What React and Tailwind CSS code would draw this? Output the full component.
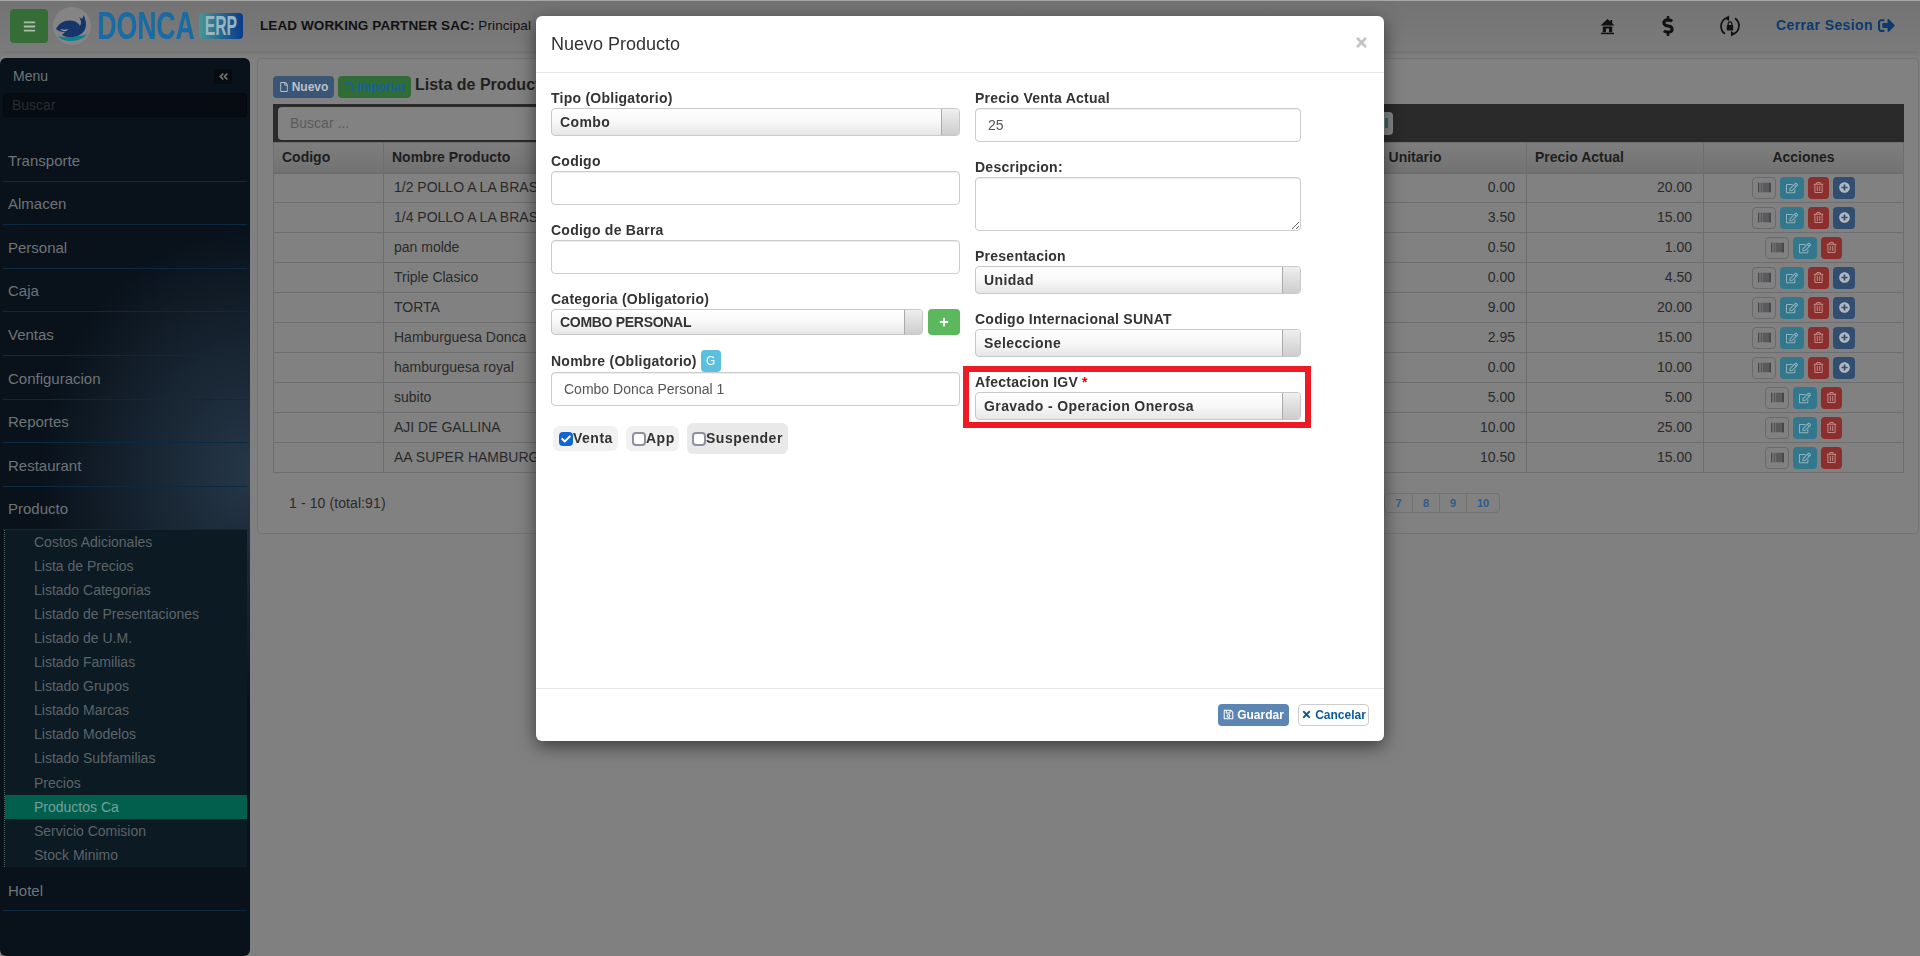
import {
  FaBars, FaDollarSign, FaSignOutAlt, FaRegFile, FaAngleDoubleLeft, FaBarcode,
  FaRegEdit, FaRegTrashAlt, FaPlusCircle, FaPlus, FaTimes, FaRegSave, FaCheck,
} from "react-icons/fa";

const MENU_TOP = ["Transporte", "Almacen", "Personal", "Caja", "Ventas", "Configuracion", "Reportes", "Restaurant"];

const SUB_MENU = [
  "Costos Adicionales", "Lista de Precios", "Listado Categorias", "Listado de Presentaciones",
  "Listado de U.M.", "Listado Familias", "Listado Grupos", "Listado Marcas", "Listado Modelos",
  "Listado Subfamilias", "Precios", "Productos Ca", "Servicio Comision", "Stock Minimo",
];

const ROWS = [
  ["1/2 POLLO A LA BRASA", "0.00", "20.00", true],
  ["1/4 POLLO A LA BRASA", "3.50", "15.00", true],
  ["pan molde", "0.50", "1.00", false],
  ["Triple Clasico", "0.00", "4.50", true],
  ["TORTA", "9.00", "20.00", true],
  ["Hamburguesa Donca", "2.95", "15.00", true],
  ["hamburguesa royal", "0.00", "10.00", true],
  ["subito", "5.00", "5.00", false],
  ["AJI DE GALLINA", "10.00", "25.00", false],
  ["AA SUPER HAMBURGUESA", "10.50", "15.00", false],
];

const Whale = () => (
  <svg viewBox="0 0 38 38" className="w-[38px] h-[38px] shrink-0">
    <circle cx="19" cy="19" r="19" fill="#858585" />
    <path d="M5 29c4 7 24 7 29-2-6 3-10 1-15 2s-9 2-14 0z" fill="#12808c" />
    <path d="M3 22c3-7 11-10 18-8 3 1 5 3 6 5 2-3 1-6-1-9l3 2 2-4 1 4c2 5 1 12-4 15-6 4-14 4-19 1l3-3c-4 0-7-1-9-3z" fill="#15356b" />
    <path d="M7 22c3 1 6 1 8 0-1 3-5 3-8 0z" fill="#8fa0b0" />
  </svg>
);

const HomeIcon = () => (
  <svg viewBox="0 0 16 18" className="w-[15px] h-[17px]" fill="#111">
    <path d="M8 1l3 2.6V2h2v3.4L15.5 8H.5z" />
    <path d="M3 9h10v6H9.6v-4H6.4v4H3z" />
    <rect x="1" y="15.6" width="14" height="1.6" />
  </svg>
);

const LockCycle = () => (
  <svg viewBox="0 0 24 24" className="w-[22px] h-[22px]" fill="none" stroke="#111" strokeWidth="1.9">
    <path d="M6.5 20.5a10 10 0 0 1 1-17" />
    <path d="M17.5 3.5a10 10 0 0 1-1 17" />
    <path d="M11 0.5v6l-5-3z" fill="#111" stroke="none" />
    <path d="M13 23.5v-6l5 3z" fill="#111" stroke="none" />
    <rect x="8.5" y="11" width="7" height="6" rx="0.8" fill="#111" stroke="none" />
    <path d="M10 11V9.6a2 2 0 0 1 4 0V11" strokeWidth="1.4" />
  </svg>
);

const Navbar = () => (
  <header className="h-[51px] border-t border-t-[#a8a8a8] bg-gradient-to-b from-[#737373] to-[#7b7b7b] shadow-[0_2px_5px_rgba(0,0,0,0.12)] flex items-center pl-[10px] pr-[25px]">
    <button className="w-[38px] h-[34px] rounded bg-[#366c36] flex items-center justify-center text-[#a9bfa9] text-[13px]">
      <FaBars />
    </button>
    <div className="ml-[5px]"><Whale /></div>
    <div className="ml-[6px] w-[97px] h-[30px]">
      <span className="block origin-top-left scale-x-[0.7] whitespace-nowrap font-bold text-[38px] leading-[30px] text-[#176ba6]">DONCA</span>
    </div>
    <div className="ml-[5px] w-[44px] h-[26px] rounded-sm bg-gradient-to-r from-[#489797] to-[#0b3a8a] flex items-center justify-center">
      <span className="scale-x-[0.56] font-bold text-[28px] leading-none text-[#9ab6bc]">ERP</span>
    </div>
    <div className="ml-[17px] text-[13.5px] tracking-[0.1px] text-[#111] whitespace-nowrap">
      <b>LEAD WORKING PARTNER SAC:</b> Principal
    </div>
    <div className="ml-auto flex items-center">
      <HomeIcon />
      <FaDollarSign className="ml-[43px] text-[20px] text-[#111]" />
      <div className="ml-[41px]"><LockCycle /></div>
      <div className="ml-[35px] flex items-center gap-[5px] text-[14px] font-bold tracking-[0.4px] text-[#0b3a6e] -mt-[2px]">
        Cerrar Sesion <FaSignOutAlt className="text-[17px]" />
      </div>
    </div>
  </header>
);

const Sidebar = () => (
  <aside className="w-[250px] shrink-0 h-[898px] rounded-t-md rounded-b-md bg-[radial-gradient(ellipse_210px_240px_at_100%_412px,#263748,#09121b)] px-[3px] text-[#6f7477] overflow-hidden">
    <div className="h-[35px] pt-[1px] flex items-center justify-between pl-[10px] pr-[15px] text-[14px]">
      <span>Menu</span>
      <span className="w-[18px] h-[15px] bg-[#070b10] flex items-center justify-center text-[11px]"><FaAngleDoubleLeft /></span>
    </div>
    <div className="h-[24px] rounded bg-[#070c13] border border-[#05080c] pl-[8px] pt-[1px] flex items-center text-[14px] text-[#252b30]">Buscar</div>
    <nav className="mt-[21px]">
      {MENU_TOP.map((m) => (
        <div key={m} className="h-[43.6px] pt-[3px] flex items-center pl-[5px] border-b border-[#0b2a42] text-[15px]">{m}</div>
      ))}
      <div className="h-[43.6px] pt-[3px] flex items-center pl-[5px] border-b border-[#0b2a42] text-[15px]">Producto</div>
      <ul className="border-l border-dotted border-[#566] bg-[#0c1a24] ml-px">
        {SUB_MENU.map((s) => (
          <li key={s} className={`h-[24.07px] flex items-center pl-[29px] text-[14px] ${s === "Productos Ca" ? "bg-[#025f4e] text-[#74a098]" : "text-[#5c6468]"}`}>{s}</li>
        ))}
      </ul>
      <div className="h-[43.6px] pt-[5px] flex items-center pl-[5px] border-b border-[#0b2a42] text-[15px] bg-[#09121b]">Hotel</div>
    </nav>
  </aside>
);

const ActionBtn = ({ className, children }) => (
  <span className={`h-[22px] rounded flex items-center justify-center ${className}`}>{children}</span>
);

const ProductTable = () => (
  <table className="w-full table-fixed border-collapse text-[14px] text-[#2a2a2a]">
    <thead>
      <tr className="h-[30px] bg-gradient-to-b from-[#7e7e7e] to-[#727272] text-[#1e1e1e] font-bold">
        <th className="w-[110px] border border-[#6e6e6e] border-b-2 px-[8px] text-left">Codigo</th>
        <th className="border border-[#6e6e6e] border-b-2 px-[8px] text-left">Nombre Producto</th>
        <th className="w-[190px] border border-[#6e6e6e] border-b-2 px-[8px] text-left">Costo Unitario</th>
        <th className="w-[177px] border border-[#6e6e6e] border-b-2 px-[8px] text-left">Precio Actual</th>
        <th className="w-[200px] border border-[#6e6e6e] border-b-2 px-[8px] text-center">Acciones</th>
      </tr>
    </thead>
    <tbody>
      {ROWS.map(([name, cost, price, extra]) => (
        <tr key={name} className="h-[30px]">
          <td className="border border-[#6e6e6e]" />
          <td className="border border-[#6e6e6e] pl-[10px] whitespace-nowrap overflow-hidden">{name}</td>
          <td className="border border-[#6e6e6e] pr-[11px] text-right">{cost}</td>
          <td className="border border-[#6e6e6e] pr-[11px] text-right">{price}</td>
          <td className="border border-[#6e6e6e]">
            <div className="flex justify-center gap-[4px]">
              <ActionBtn className="w-[24px] border border-[#6a6a6a] text-[#2c2c34] text-[13px]"><FaBarcode /></ActionBtn>
              <ActionBtn className="w-[24px] bg-[#33778c] text-[#8fb3bd] text-[12px]"><FaRegEdit /></ActionBtn>
              <ActionBtn className="w-[21px] bg-[#8a2f2d] text-[#c08a88] text-[11px]"><FaRegTrashAlt /></ActionBtn>
              {extra && <ActionBtn className="w-[22px] bg-[#314e70] text-[#b0b7bf] text-[11px]"><FaPlusCircle /></ActionBtn>}
            </div>
          </td>
        </tr>
      ))}
    </tbody>
  </table>
);

const Panel = () => (
  <section className="flex-1 h-[476px] rounded border border-[#747474] bg-[#818181] pl-[15px] pr-[14px] pt-[17px]">
    <div className="h-[28px] flex items-start gap-[4px]">
      <button className="w-[61px] h-[22px] rounded-sm bg-[#3a5575] flex items-center justify-center gap-[3px] text-[12px] font-bold text-[#bcc1c7]">
        <FaRegFile className="text-[10px]" /> Nuevo
      </button>
      <button className="w-[73px] h-[22px] rounded-sm bg-[#316b35] flex items-center justify-center gap-[3px] text-[12px] font-bold text-[#14639a]">
        <FaRegFile className="text-[10px]" /> Importar
      </button>
      <span className="text-[16px] font-bold text-[#1f1f1f] leading-[18px] whitespace-nowrap">Lista de Productos</span>
    </div>
    <div className="h-[38px] bg-[#2a2a2a] pl-[5px] flex items-center">
      <div className="h-[33px] w-[1086px] rounded-l bg-[#828282] pl-[12px] flex items-center text-[14px] text-[#5a5a5a]">Buscar ...</div>
      <div className="w-[29px] h-[23px] rounded-r bg-[#858585] flex items-center justify-end pr-[5px]">
        <span className="w-[3px] h-[10px] bg-[#2f666e]" />
      </div>
    </div>
    <ProductTable />
    <div className="mt-[20px] flex items-center h-[20px] pl-[16px] text-[14px] text-[#2b2b2b]">
      <span className="tracking-[0.1px]">1 - 10 (total:91)</span>
      <div className="ml-auto mr-[404px] h-[20px] flex rounded border border-[#727272] text-[11px] font-bold text-[#2f5d8a]">
        {["7", "8", "9", "10"].map((p, i) => (
          <span key={p} className={`flex items-center justify-center ${p === "10" ? "w-[33px]" : "w-[27px]"} ${i > 0 ? "border-l border-[#727272]" : ""}`}>{p}</span>
        ))}
      </div>
    </div>
  </section>
);

const Label = ({ children, className = "" }) => (
  <div className={`h-[20px] flex items-center text-[14px] font-bold tracking-[0.25px] text-[#333] whitespace-nowrap ${className}`}>{children}</div>
);

const Input = ({ value = "" }) => (
  <input readOnly value={value} className="block w-full h-[34px] rounded border border-[#ccc] pl-[12px] text-[14px] text-[#555] shadow-[inset_0_1px_1px_rgba(0,0,0,0.075)] outline-none" />
);

const Select = ({ value, h = "h-[28px]", track = "tracking-[0.4px]" }) => (
  <div className={`${h} flex rounded-[4px] border border-[#c8c8c8] bg-gradient-to-b from-white via-[#f8f8f8] to-[#e6e6e6] overflow-hidden`}>
    <span className={`flex-1 pl-[8px] pt-[1px] flex items-center text-[14px] font-bold text-[#333] ${track} whitespace-nowrap`}>{value}</span>
    <span className="w-[18px] border-l border-[#aaa] bg-gradient-to-b from-[#efefef] to-[#cdcdcd]" />
  </div>
);

const Check = ({ checked, label, className }) => (
  <div className={`flex items-center rounded-md ${className}`}>
    {checked ? (
      <span className="w-[14px] h-[14px] rounded-sm bg-[#0f62d8] flex items-center justify-center text-white text-[10px]"><FaCheck /></span>
    ) : (
      <span className="w-[14px] h-[14px] rounded-sm border-2 border-[#8f8fa3] bg-white" />
    )}
    <span className="text-[14px] font-bold text-[#333] tracking-[0.5px]">{label}</span>
  </div>
);

const ProductModal = () => (
  <div className="fixed left-[536px] top-[16px] w-[848px] h-[725px] rounded-md bg-white shadow-[0_5px_18px_rgba(0,0,0,0.55)] flex flex-col">
    <div className="h-[57px] shrink-0 border-b border-[#e5e5e5] px-[15px] flex items-center justify-between">
      <h4 className="text-[18px] text-[#333]">Nuevo Producto</h4>
      <FaTimes className="text-[15px] text-[#c4c4c4] -mt-[4px]" />
    </div>

    <div className="flex-1 pl-[15px] pt-[15px] flex gap-[15px]">
      <div className="w-[409px]">
        <Label>Tipo (Obligatorio)</Label>
        <Select value="Combo" />
        <Label className="mt-[15px]">Codigo</Label>
        <Input />
        <Label className="mt-[15px]">Codigo de Barra</Label>
        <Input />
        <Label className="mt-[15px]">Categoria (Obligatorio)</Label>
        <div className="flex gap-[5px]">
          <div className="flex-1"><Select value="COMBO PERSONAL" h="h-[26px]" track="tracking-[-0.3px]" /></div>
          <button className="w-[32px] h-[26px] rounded-sm bg-[#5cb85c] flex items-center justify-center text-white text-[10px]"><FaPlus /></button>
        </div>
        <div className="mt-[15px] h-[22px] flex items-center gap-[4px] text-[14px] font-bold tracking-[0.25px] text-[#333]">
          Nombre (Obligatorio)
          <span className="w-[20px] h-[22px] rounded-sm bg-[#5bc0de] flex items-center justify-center text-[12px] font-normal text-white">G</span>
        </div>
        <Input value="Combo Donca Personal 1" />
        <div className="mt-[17px] pl-[2px] flex items-center gap-[8px]">
          <Check checked label="Venta" className="w-[65px] h-[25px] bg-[#f1f1f1] pl-[6px]" />
          <Check label="App" className="w-[53px] h-[25px] bg-[#f1f1f1] pl-[6px]" />
          <Check label="Suspender" className="w-[101px] h-[31px] bg-[#e9e9e9] pl-[5px]" />
        </div>
      </div>

      <div className="w-[326px]">
        <Label>Precio Venta Actual</Label>
        <Input value="25" />
        <Label className="mt-[16px] !h-[19px]">Descripcion:</Label>
        <textarea readOnly className="block w-full h-[54px] rounded border border-[#ccc] resize shadow-[inset_0_1px_1px_rgba(0,0,0,0.075)] outline-none" />
        <Label className="mt-[15px]">Presentacion</Label>
        <Select value="Unidad" />
        <Label className="mt-[15px]">Codigo Internacional SUNAT</Label>
        <Select value="Seleccione" />
        <div className="relative mt-[15px]">
          <Label>Afectacion IGV <span className="ml-[4px] text-[#e00]">*</span></Label>
          <Select value="Gravado - Operacion Onerosa" />
          <div className="absolute -left-[12px] -right-[10px] -top-[6px] -bottom-[8px] border-[6px] border-[#ed1c24] pointer-events-none" />
        </div>
      </div>
    </div>

    <div className="h-[53px] shrink-0 border-t border-[#e5e5e5] pr-[15px] flex items-center justify-end gap-[9px] pb-[1px]">
      <button className="w-[71px] h-[22px] rounded-sm bg-[#5b86b3] flex items-center justify-center gap-[3px] text-[12px] font-bold text-white">
        <FaRegSave className="text-[11px]" /> Guardar
      </button>
      <button className="w-[71px] h-[22px] rounded-sm border border-[#ccc] bg-white flex items-center justify-center gap-[3px] text-[12px] font-bold text-[#0b5a9e]">
        <FaTimes className="text-[11px]" /> Cancelar
      </button>
    </div>
  </div>
);

export default function App() {
  return (
    <div className="w-[1920px] h-[956px] overflow-hidden bg-[#808080] font-['Liberation_Sans',Arial,sans-serif]">
      <Navbar />
      <div className="mt-[7px] flex items-start gap-[7px] pr-px">
        <Sidebar />
        <Panel />
      </div>
      <ProductModal />
    </div>
  );
}
